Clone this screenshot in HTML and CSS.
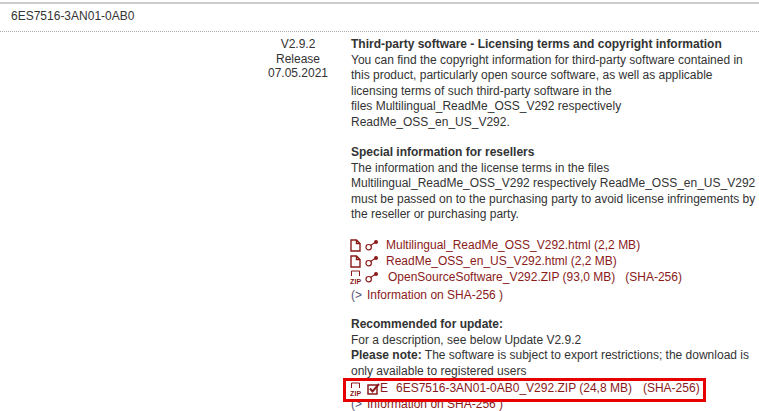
FILE: index.html
```html
<!DOCTYPE html>
<html lang="en">

<head>
    <meta charset="UTF-8" />
    <title>6ES7516-3AN01-0AB0</title>
    <link rel="stylesheet" href="styles.css">
</head>

<body class="page">

    <svg class="icon-defs" width="0" height="0">
        <symbol id="ico-doc" viewBox="0 0 11 13">
            <path d="M1 1H6.5L10 4.5V12H1ZM6.5 1V4.5H10" fill="none" stroke="#8a1a1a" stroke-width="1.4" />
        </symbol>
        <symbol id="ico-key" viewBox="0 0 14 11">
            <circle cx="3.7" cy="7.2" r="2.7" fill="none" stroke="#8a1a1a" stroke-width="1.2" />
            <path d="M5.5 5.4L10 2.5" fill="none" stroke="#8a1a1a" stroke-width="1.2" />
            <circle cx="11" cy="2" r="2" fill="#8a1a1a" />
        </symbol>
    </svg>

    <div class="product-title">6ES7516-3AN01-0AB0</div>

    <div class="entry">
        <div class="version">V2.9.2<br />Release<br />07.05.2021</div>

        <div class="details">
            <p class="block"><b>Third-party software - Licensing terms and copyright information</b><br />
                You can find the copyright information for third-party software contained in<br />
                this product, particularly open source software, as well as applicable<br />
                licensing terms of such third-party software in the<br />
                files Multilingual_ReadMe_OSS_V292 respectively<br />
                ReadMe_OSS_en_US_V292.</p>

            <p class="block block-resellers"><b>Special information for resellers</b><br />
                The information and the license terms in the files<br />
                Multilingual_ReadMe_OSS_V292 respectively ReadMe_OSS_en_US_V292<br />
                must be passed on to the purchasing party to avoid license infringements by<br />
                the reseller or purchasing party.</p>

            <ul class="downloads">
                <li class="dl-row">
                    <svg class="ico-file"><use href="#ico-doc" /></svg>
                    <svg class="ico-key"><use href="#ico-key" /></svg>
                    <a class="dl-link">Multilingual_ReadMe_OSS_V292.html (2,2 MB)</a>
                </li>
                <li class="dl-row">
                    <svg class="ico-file"><use href="#ico-doc" /></svg>
                    <svg class="ico-key"><use href="#ico-key" /></svg>
                    <a class="dl-link">ReadMe_OSS_en_US_V292.html (2,2 MB)</a>
                </li>
                <li class="dl-row">
                    <svg class="ico-zip" viewBox="0 0 12 15">
                        <path d="M1.5 6V1H9.5V6" fill="none" stroke="#8a1a1a" stroke-width="1" />
                        <text class="zip-label" x="0" y="13.5">ZIP</text>
                    </svg>
                    <svg class="ico-key"><use href="#ico-key" /></svg>
                    <a class="dl-link dl-link-wide">OpenSourceSoftware_V292.ZIP (93,0 MB)</a>
                    <a class="dl-sha dl-sha-tight">(SHA-256)</a>
                </li>
            </ul>
            <div class="sha-info"><span class="sha-arrow">(&gt;</span>Information on SHA-256 )</div>

            <p class="block block-update"><b>Recommended for update:</b><br />
                For a description, see below Update V2.9.2<br />
                <b>Please note:</b> The software is subject to export restrictions; the download is<br />
                only available to registered users</p>

            <div class="dl-row dl-row-marked">
                <svg class="ico-zip" viewBox="0 0 12 15">
                    <path d="M1.5 6V1H9.5V6" fill="none" stroke="#8a1a1a" stroke-width="1" />
                    <text class="zip-label" x="0" y="13.5">ZIP</text>
                </svg>
                <svg class="ico-check" viewBox="0 0 13 12">
                    <path d="M1 2H10V11H1Z" fill="none" stroke="#8a1a1a" stroke-width="1.5" />
                    <path d="M3 5.5L5.5 8.5L12 1" fill="none" stroke="#8a1a1a" stroke-width="2" />
                </svg>
                <span class="dl-e">E</span>
                <a class="dl-link dl-link-marked">6ES7516-3AN01-0AB0_V292.ZIP (24,8 MB)</a>
                <a class="dl-sha dl-sha-marked">(SHA-256)</a>
                <div class="highlight"></div>
            </div>
            <div class="sha-info sha-info-last"><span class="sha-arrow">(&gt;</span>Information on SHA-256 )</div>
        </div>
    </div>

</body>

</html>
```

FILE: styles.css
```css
.page {
    margin: 0;
    height: 411px;
    overflow: hidden;
    background-color: #fff;
    color: #333;
    font-family: "Liberation Sans", Arial, sans-serif;
    font-size: 12px;
    line-height: 15.5px;
}

.icon-defs {
    display: block;
    height: 0;
}

.zip-label {
    font-family: "Liberation Sans", Arial, sans-serif;
    font-size: 7px;
    font-weight: bold;
    letter-spacing: 0.2px;
    fill: #8a1a1a;
}

.product-title {
    margin: 2px 0 0 0;
    border-top: 2px solid #ccc;
    border-bottom: 1px dotted #aaa;
    padding: 5px 0 7px 11px;
    line-height: 15px;
}

.entry {
    display: flex;
    padding-top: 5px;
}

.version {
    flex: none;
    box-sizing: border-box;
    width: 347px;
    padding-left: 249px;
    text-align: center;
    line-height: 14.7px;
}

.details {
    margin-left: 4px;
    white-space: nowrap;
}

.block {
    margin: 0 0 14px 0;
}

.block-resellers {
    margin-bottom: 15px;
    padding-top: 1px;
}

.downloads {
    list-style: none;
    margin: 0;
    padding: 0;
}

.dl-row {
    display: flex;
    align-items: center;
    height: 16px;
    position: relative;
}

.ico-file {
    width: 11px;
    height: 13px;
    margin-left: -1px;
    flex: none;
}

.ico-zip {
    width: 12px;
    height: 15px;
    margin-left: -1px;
    margin-right: -1px;
    flex: none;
}

.ico-key {
    width: 14px;
    height: 11px;
    margin-left: 4px;
    flex: none;
}

.ico-check {
    width: 13px;
    height: 12px;
    margin-left: 6px;
    flex: none;
}

.dl-e {
    margin-left: 0;
    color: #8a1a1a;
}

.dl-link {
    margin-left: 7px;
    color: #8a1a1a;
}

.dl-link-wide {
    margin-left: 9px;
}

.dl-link-marked {
    margin-left: 8px;
}

.dl-sha {
    margin-left: 12px;
    color: #8a1a1a;
}

.dl-sha-tight {
    margin-left: 10px;
}

.dl-sha-marked {
    margin-left: 11px;
}

.dl-row-marked {
    margin-top: 2px;
}

.sha-info {
    color: #8a1a1a;
    margin-top: 2px;
    margin-bottom: 14px;
}

.sha-info-last {
    margin: 0;
}

.sha-arrow {
    margin-right: 5px;
    color: #557;
}

.block-update {
    margin-bottom: 0;
}

.highlight {
    position: absolute;
    left: -8px;
    top: -3px;
    width: 363px;
    height: 24px;
    box-sizing: border-box;
    border: 3px solid #e60000;
}
```
